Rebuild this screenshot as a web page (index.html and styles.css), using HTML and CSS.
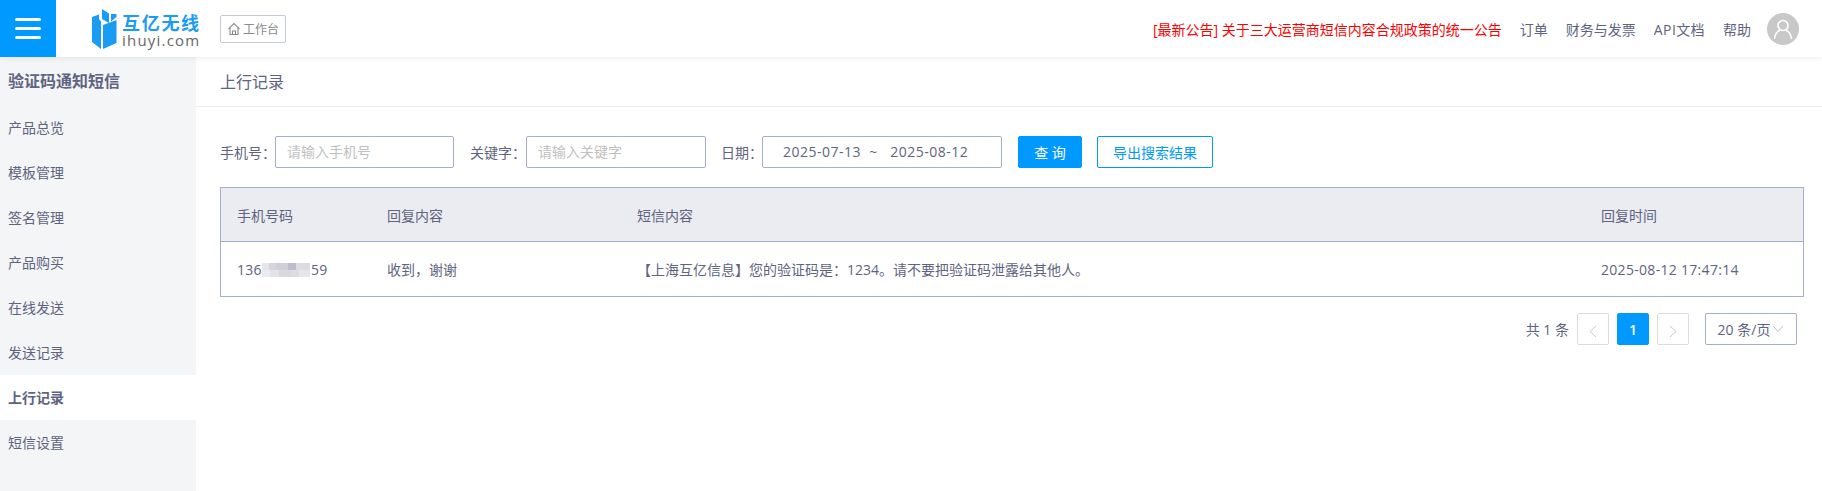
FILE: index.html
```html
<!DOCTYPE html>
<html lang="zh-CN">
<head>
<meta charset="utf-8">
<title>上行记录</title>
<link rel="stylesheet" href="styles.css">
</head>
<body>
<header class="topbar">
  <div class="burger"><span></span><span></span><span></span></div>
  <div class="logo">
    <svg class="logo-mark" width="34" height="46" viewBox="0 0 34 46">
      <path d="M14 3 L21 7.5 L21 17 L14 13 Z" fill="#1a9cf5"/>
      <path d="M23 8 L28.5 8 L28.5 11 L23 15.5 Z" fill="#1a9cf5"/>
      <path d="M4 11 L11 8.5 L11 13 L13 15.5 L13 43 L4 36 Z" fill="#1a9cf5"/>
      <path d="M15 19 L28.5 14 L28.5 37 L15 43 Z" fill="#1a9cf5"/>
    </svg>
    <div class="logo-text">
      <div class="logo-cn">互亿无线</div>
      <div class="logo-en">ihuyi.com</div>
    </div>
  </div>
  <div class="workbench">
    <svg width="14" height="14" viewBox="0 0 14 14" fill="none" stroke="#8a8a8a" stroke-width="1.1"><path d="M1.5 6.8 L7 1.5 L12.5 6.8 M3 5.8 V12.5 H11 V5.8 M5.5 12.5 V9 H8.5 V12.5"/></svg>
    <span>工作台</span>
  </div>
  <nav class="topnav">
    <a class="notice">[最新公告] 关于三大运营商短信内容合规政策的统一公告</a>
    <a>订单</a>
    <a>财务与发票</a>
    <a class="api">API文档</a>
    <a>帮助</a>
    <div class="avatar">
      <svg width="24" height="24" viewBox="0 0 24 24" fill="none" stroke="#fff" stroke-width="1.6"><circle cx="12" cy="8.5" r="5"/><path d="M3.5 22 C4 16 7 14 9.5 13 M20.5 22 C20 16 17 14 14.5 13"/></svg>
    </div>
  </nav>
</header>
<div class="body">
  <aside class="sidebar">
    <h2 class="side-title">验证码通知短信</h2>
    <ul class="side-menu">
      <li>产品总览</li>
      <li>模板管理</li>
      <li>签名管理</li>
      <li>产品购买</li>
      <li>在线发送</li>
      <li>发送记录</li>
      <li class="active">上行记录</li>
      <li>短信设置</li>
    </ul>
  </aside>
  <main class="main">
    <div class="page-title">上行记录</div>
    <div class="content">
      <form class="filters">
        <label class="f-label l-phone">手机号：</label>
        <div class="input w-phone ph">请输入手机号</div>
        <label class="f-label l-key">关键字：</label>
        <div class="input w-key ph">请输入关键字</div>
        <label class="f-label l-date">日期：</label>
        <div class="input w-date">2025-07-13&nbsp; ~&nbsp;&nbsp; 2025-08-12</div>
        <button type="button" class="btn primary">查 询</button>
        <button type="button" class="btn outline">导出搜索结果</button>
      </form>
      <div class="table">
        <div class="row head">
          <div>手机号码</div><div>回复内容</div><div>短信内容</div><div>回复时间</div>
        </div>
        <div class="row">
          <div class="phone">136<span class="blur"></span>59</div>
          <div>收到，谢谢</div>
          <div class="msg">【上海互亿信息】您的验证码是：1234。请不要把验证码泄露给其他人。</div>
          <div class="time">2025-08-12 17:47:14</div>
        </div>
      </div>
      <div class="pager">
        <span class="total">共 1 条</span>
        <span class="pg disabled"><svg width="10" height="12" viewBox="0 0 10 12" fill="none" stroke="#c8c8c8"><path d="M8 1 L2 6.5 L8 12"/></svg></span>
        <span class="pg current">1</span>
        <span class="pg disabled"><svg width="10" height="12" viewBox="0 0 10 12" fill="none" stroke="#c8c8c8"><path d="M2 1 L8 6.5 L2 12"/></svg></span>
        <span class="size">20 条/页<svg width="12" height="8" viewBox="0 0 12 8" fill="none" stroke="#bdbdbd"><path d="M1 1 L6 6.5 L11 1"/></svg></span>
      </div>
    </div>
  </main>
</div>
</body>
</html>
```
FILE: styles.css
```css
* { box-sizing: border-box; }
html, body { margin: 0; padding: 0; height: 100%; }
body {
  font-family: "Open Sans", "Noto Sans CJK SC", sans-serif;
  font-size: 14px;
  color: #5e6480;
  background: #fff;
  overflow: hidden;
}
.topbar {
  height: 57px;
  display: flex;
  align-items: center;
  background: #fff;
  box-shadow: 0 1px 6px rgba(0,0,0,.08);
  position: relative;
  z-index: 2;
}
.burger {
  width: 56px;
  height: 57px;
  background: #0099ff;
  display: flex;
  flex-direction: column;
  align-items: center;
  justify-content: center;
  gap: 6px;
}
.burger span { width: 26px; height: 3px; background: #fff; border-radius: 2px; }
.logo { display: flex; align-items: center; margin-left: 32px; }
.logo-mark { display: block; }
.logo-text { width: 80px; padding-top: 3px; }
.logo-cn { font-size: 18px; line-height: 20px; font-weight: 700; color: #1a9cf5; letter-spacing: 1.7px; white-space: nowrap; }
.logo-en { font-size: 15px; line-height: 15px; color: #666; letter-spacing: 1.2px; white-space: nowrap; }
.workbench {
  margin-left: 18px;
  width: 66px;
  height: 28px;
  border: 1px solid #c5c9dc;
  border-radius: 2px;
  display: flex;
  align-items: center;
  justify-content: center;
  gap: 2px;
  font-size: 12px;
  color: #8a8a8a;
}
.topnav { margin-left: auto; display: flex; align-items: center; gap: 18px; padding-right: 23px; font-size: 14px; }
.notice { color: #ff0000; }
.api { letter-spacing: .4px; }
.avatar {
  width: 32px;
  height: 32px;
  margin-left: -2px;
  border-radius: 50%;
  background: #c8c8c8;
  display: flex;
  align-items: center;
  justify-content: center;
}
.body { display: flex; height: 434px; }
.sidebar { width: 196px; background: #f4f5f7; flex: none; }
.side-title { margin: 0; height: 48px; padding: 6px 8px 0; font-size: 16px; line-height: 36px; font-weight: 700; color: #5e6480; }
.side-menu { margin: 0; padding: 0; list-style: none; }
.side-menu li { height: 45px; line-height: 45px; padding-left: 8px; font-size: 14px; }
.side-menu li.active { background: #fff; font-weight: 700; }
.main { flex: 1; min-width: 0; }
.page-title { height: 50px; padding: 0 24px; line-height: 50px; font-size: 16px; border-bottom: 1px solid #ebedf0; }
.content { padding: 28px 18px 0 24px; }
.filters { display: flex; align-items: center; height: 33px; }
.f-label { white-space: nowrap; }
.l-phone { width: 55px; }
.l-key { width: 56px; margin-left: 16px; }
.l-date { width: 41px; margin-left: 15px; }
.input {
  height: 32px;
  border: 1px solid #a3b0c8;
  border-radius: 2px;
  padding: 0 11px;
  line-height: 30px;
}
.w-phone { width: 179px; }
.w-key { width: 180px; }
.w-date { width: 240px; padding-left: 20px; white-space: pre; letter-spacing: .5px; }
.ph { color: #bfbfbf; }
.btn { height: 32px; font: inherit; border-radius: 2px; padding: 0; margin-top: 1px; }
.primary { width: 64px; margin-left: 16px; background: #0099ff; border: 1px solid #0099ff; color: #fff; }
.outline { width: 116px; margin-left: 15px; background: #fff; border: 1px solid #0099ff; color: #0099ff; }
.table { margin-top: 19px; border: 1px solid #a3b0c8; width: 1584px; }
.row { display: grid; grid-template-columns: 149px 250px 964px 1fr; height: 54px; align-items: center; }
.row > div { padding-left: 17px; white-space: nowrap; }
.row > div:first-child { padding-left: 16px; }
.row.head { background: #ebecf1; border-bottom: 1px solid #a3b0c8; }
.phone { display: flex; align-items: center; letter-spacing: .3px; }
.time { letter-spacing: .3px; }
.blur {
  display: inline-block;
  width: 48px;
  height: 14px;
  margin: 1px 1px 0 0;
  background:
    linear-gradient(90deg, #e6e6ea 0 14%, #d6d5de 14% 30%, #cfced9 30% 55%, #bdbccb 55% 70%, #dcdce2 70% 100%) top / 100% 50% no-repeat,
    linear-gradient(90deg, #ececf0 0 16%, #e2e2e7 16% 35%, #d8d8e0 35% 60%, #dcdce2 60% 78%, #e5e5ea 78% 100%) bottom / 100% 50% no-repeat;
}
.pager { display: flex; justify-content: flex-end; align-items: center; margin-top: 16px; height: 32px; width: 1584px; padding-right: 7px; }
.total { margin-right: 8px; }
.pg { width: 32px; height: 32px; border: 1px solid #dcdcdc; border-radius: 2px; display: flex; align-items: center; justify-content: center; padding-top: 3px; margin-right: 8px; }
.pg.current { background: #0099ff; border-color: #0099ff; color: #fff; font-weight: 600; padding-top: 0; }
.size { margin-left: 8px; width: 92px; height: 32px; border: 1px solid #a3b0c8; border-radius: 2px; display: flex; align-items: center; justify-content: center; gap: 2px; white-space: nowrap; }
```
